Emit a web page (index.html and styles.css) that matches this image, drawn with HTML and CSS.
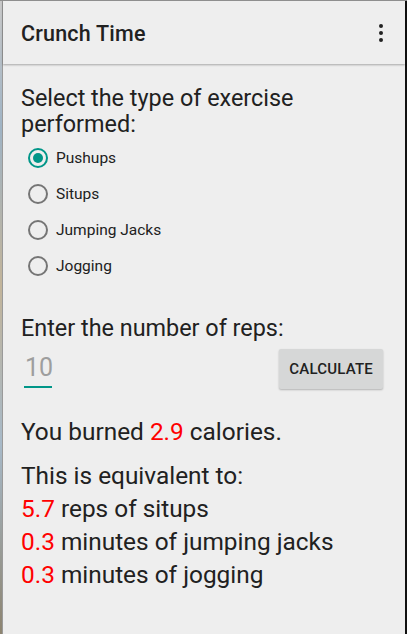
FILE: index.html
```html
<!DOCTYPE html>
<html>
<head>
<link rel="stylesheet" href="styles.css">
</head>
<body>
<div class="screen">
    <div class="edge"></div>
    <div class="app">
        <div class="toolbar">
            <span class="title">Crunch Time</span>
            <span class="overflow"><i></i><i></i><i></i></span>
        </div>
        <div class="content">
            <p class="prompt">Select the type of exercise performed:</p>
            <div class="radios">
                <div class="radio checked"><span class="circle"></span><span class="label">Pushups</span></div>
                <div class="radio"><span class="circle"></span><span class="label">Situps</span></div>
                <div class="radio"><span class="circle"></span><span class="label">Jumping Jacks</span></div>
                <div class="radio"><span class="circle"></span><span class="label">Jogging</span></div>
            </div>
            <p class="prompt reps">Enter the number of reps:</p>
            <div class="entry">
                <span class="field">10</span>
                <span class="button">CALCULATE</span>
            </div>
            <p class="result">You burned <span class="num">2.9</span> calories.</p>
            <div class="equiv">
                <p>This is equivalent to:</p>
                <p><span class="num">5.7</span> reps of situps</p>
                <p><span class="num">0.3</span> minutes of jumping jacks</p>
                <p><span class="num">0.3</span> minutes of jogging</p>
            </div>
        </div>
    </div>
</div>
</body>
</html>
```

FILE: styles.css
```css
html, body {
    margin: 0;
    padding: 0;
    background: #eeeeee;
}
body {
    font-family: Roboto, "Liberation Sans", sans-serif;
    color: #212121;
}
.screen {
    display: flex;
    width: 407px;
    height: 634px;
    box-sizing: border-box;
    border-top: 1px solid #8e8e8e;
    overflow: hidden;
}
.edge {
    width: 2px;
    background: linear-gradient(#c9c9c9, #9fb3c4 20%, #c2b49a 45%, #a7b9c8 70%, #8d8470);
    flex: none;
}
.app {
    flex: 1;
    border-left: 1px solid #9a9a9a;
    border-right: 2px solid #111;
    background: #eeeeee;
    display: flex;
    flex-direction: column;
}
.toolbar {
    height: 63px;
    display: flex;
    align-items: center;
    justify-content: space-between;
    padding: 0 22px 0 18px;
    box-shadow: 0 1px 2px rgba(0, 0, 0, 0.3);
    position: relative;
}
.title {
    font-size: 21.5px;
    font-weight: 500;
    letter-spacing: 0.2px;
    color: #212121;
    margin-top: 1px;
}
.overflow {
    display: flex;
    flex-direction: column;
    gap: 3px;
}
.overflow i {
    display: block;
    width: 4px;
    height: 4px;
    border-radius: 50%;
    background: #222;
}
.content {
    padding: 21px 18px 0 18px;
}
p {
    margin: 0;
}
.prompt {
    font-size: 23.4px;
    line-height: 26px;
    padding-right: 60px;
}
.radios {
    margin-top: 3px;
}
.radio {
    height: 36px;
    display: flex;
    align-items: center;
}
.circle {
    width: 16px;
    height: 16px;
    border: 2px solid #757575;
    border-radius: 50%;
    margin-left: 7px;
    margin-right: 8px;
    position: relative;
    flex: none;
}
.checked .circle {
    border-color: #009688;
}
.checked .circle::after {
    content: "";
    position: absolute;
    left: 3px;
    top: 3px;
    width: 10px;
    height: 10px;
    border-radius: 50%;
    background: #009688;
}
.label {
    font-size: 15.5px;
}
.reps {
    margin-top: 31px;
}
.entry {
    display: flex;
    justify-content: space-between;
    align-items: flex-start;
    margin-top: 8px;
}
.field {
    font-size: 25px;
    color: #9e9e9e;
    margin-left: 3px;
    margin-top: 4px;
    padding: 0 1px 4px 1px;
    border-bottom: 2px solid #009688;
    width: 26px;
}
.button {
    background: #d6d7d7;
    font-size: 15px;
    font-weight: 500;
    letter-spacing: 0.2px;
    padding: 11px 10px 11px 10px;
    border-radius: 2px;
    box-shadow: 0 1px 2px rgba(0, 0, 0, 0.25);
    margin-right: 4px;
}
.result {
    font-size: 24.4px;
    margin-top: 28px;
}
.equiv {
    margin-top: 13px;
    font-size: 24.4px;
    line-height: 33px;
}
.num {
    color: #ff0000;
}
```
